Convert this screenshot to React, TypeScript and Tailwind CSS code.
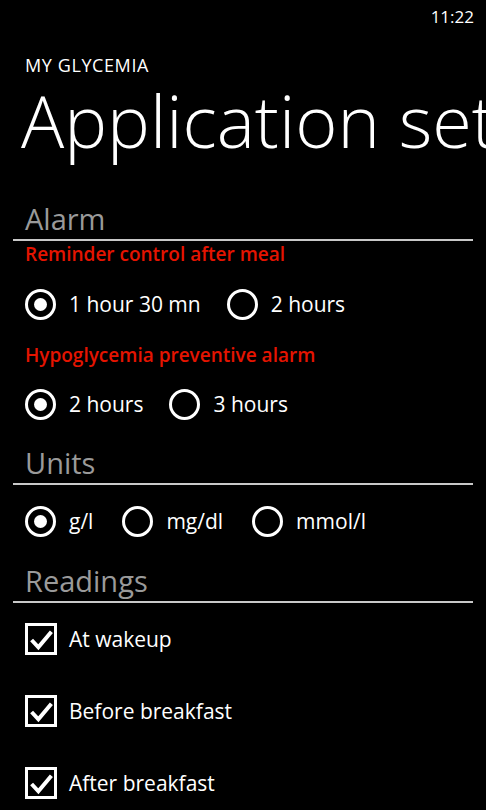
import React from 'react';

const FONT = { fontFamily: '"Open Sans", "Noto Sans", sans-serif' };

function Radio({ label, checked }: { label: string; checked?: boolean }) {
  return (
    <div className="flex items-center">
      <span className="flex h-[31px] w-[31px] items-center justify-center rounded-full border-[3px] border-white">
        {checked && <span className="h-[13px] w-[13px] rounded-full bg-white" />}
      </span>
      <span className="ml-[13px] text-[21px] leading-[32px] text-white">{label}</span>
    </div>
  );
}

function Check({ label }: { label: string }) {
  return (
    <div className="flex h-[72px] items-center">
      <span className="flex h-[32px] w-[32px] items-center justify-center border-[3px] border-white">
        <svg viewBox="0 0 24 24" className="h-[25px] w-[25px]" fill="none" stroke="white" strokeWidth="3.8">
          <path d="M2.5 12.5 L9 19.5 L21.5 4.5" strokeLinecap="butt" strokeLinejoin="miter" />
        </svg>
      </span>
      <span className="ml-[12px] text-[21px] leading-[32px] text-white">{label}</span>
    </div>
  );
}

function Section({ title }: { title: string }) {
  return (
    <div>
      <div className="px-[25px] text-[29px] leading-[32px] text-[#9a9a9a]">{title}</div>
      <div className="mx-[13px] mt-[4px] h-[2px] bg-[#c8c8c8]" />
    </div>
  );
}

function Label({ children }: { children: React.ReactNode }) {
  return (
    <div className="px-[25px] text-[19px] font-semibold leading-[24px] text-[#e51400]">{children}</div>
  );
}

export default function App() {
  return (
    <div className="h-[810px] w-[486px] overflow-hidden bg-black text-white" style={FONT}>
      <div className="flex h-[34px] items-center justify-end pr-[12px] text-[17px]">11:22</div>

      <div className="mt-[21px] px-[25px] text-[18px] leading-[20px] tracking-[0.6px]">MY GLYCEMIA</div>
      <div className="overflow-hidden whitespace-nowrap pl-[21px] text-[72px] font-light leading-[90px]">
        Application settings
      </div>

      <div className="mt-[38px]">
        <Section title="Alarm" />
      </div>
      <div className="mt-[1px]">
        <Label>Reminder control after meal</Label>
      </div>
      <div className="mt-[22px] flex gap-[26px] px-[25px]">
        <Radio label="1 hour 30 mn" checked />
        <Radio label="2 hours" />
      </div>
      <div className="mt-[23px]">
        <Label>Hypoglycemia preventive alarm</Label>
      </div>
      <div className="mt-[21px] flex gap-[26px] px-[25px]">
        <Radio label="2 hours" checked />
        <Radio label="3 hours" />
      </div>

      <div className="mt-[27px]">
        <Section title="Units" />
      </div>
      <div className="mt-[20px] flex gap-[29px] px-[25px]">
        <Radio label="g/l" checked />
        <Radio label="mg/dl" />
        <Radio label="mmol/l" />
      </div>

      <div className="mt-[28px]">
        <Section title="Readings" />
      </div>
      <div className="px-[25px]">
        <Check label="At wakeup" />
        <Check label="Before breakfast" />
        <Check label="After breakfast" />
      </div>
    </div>
  );
}
